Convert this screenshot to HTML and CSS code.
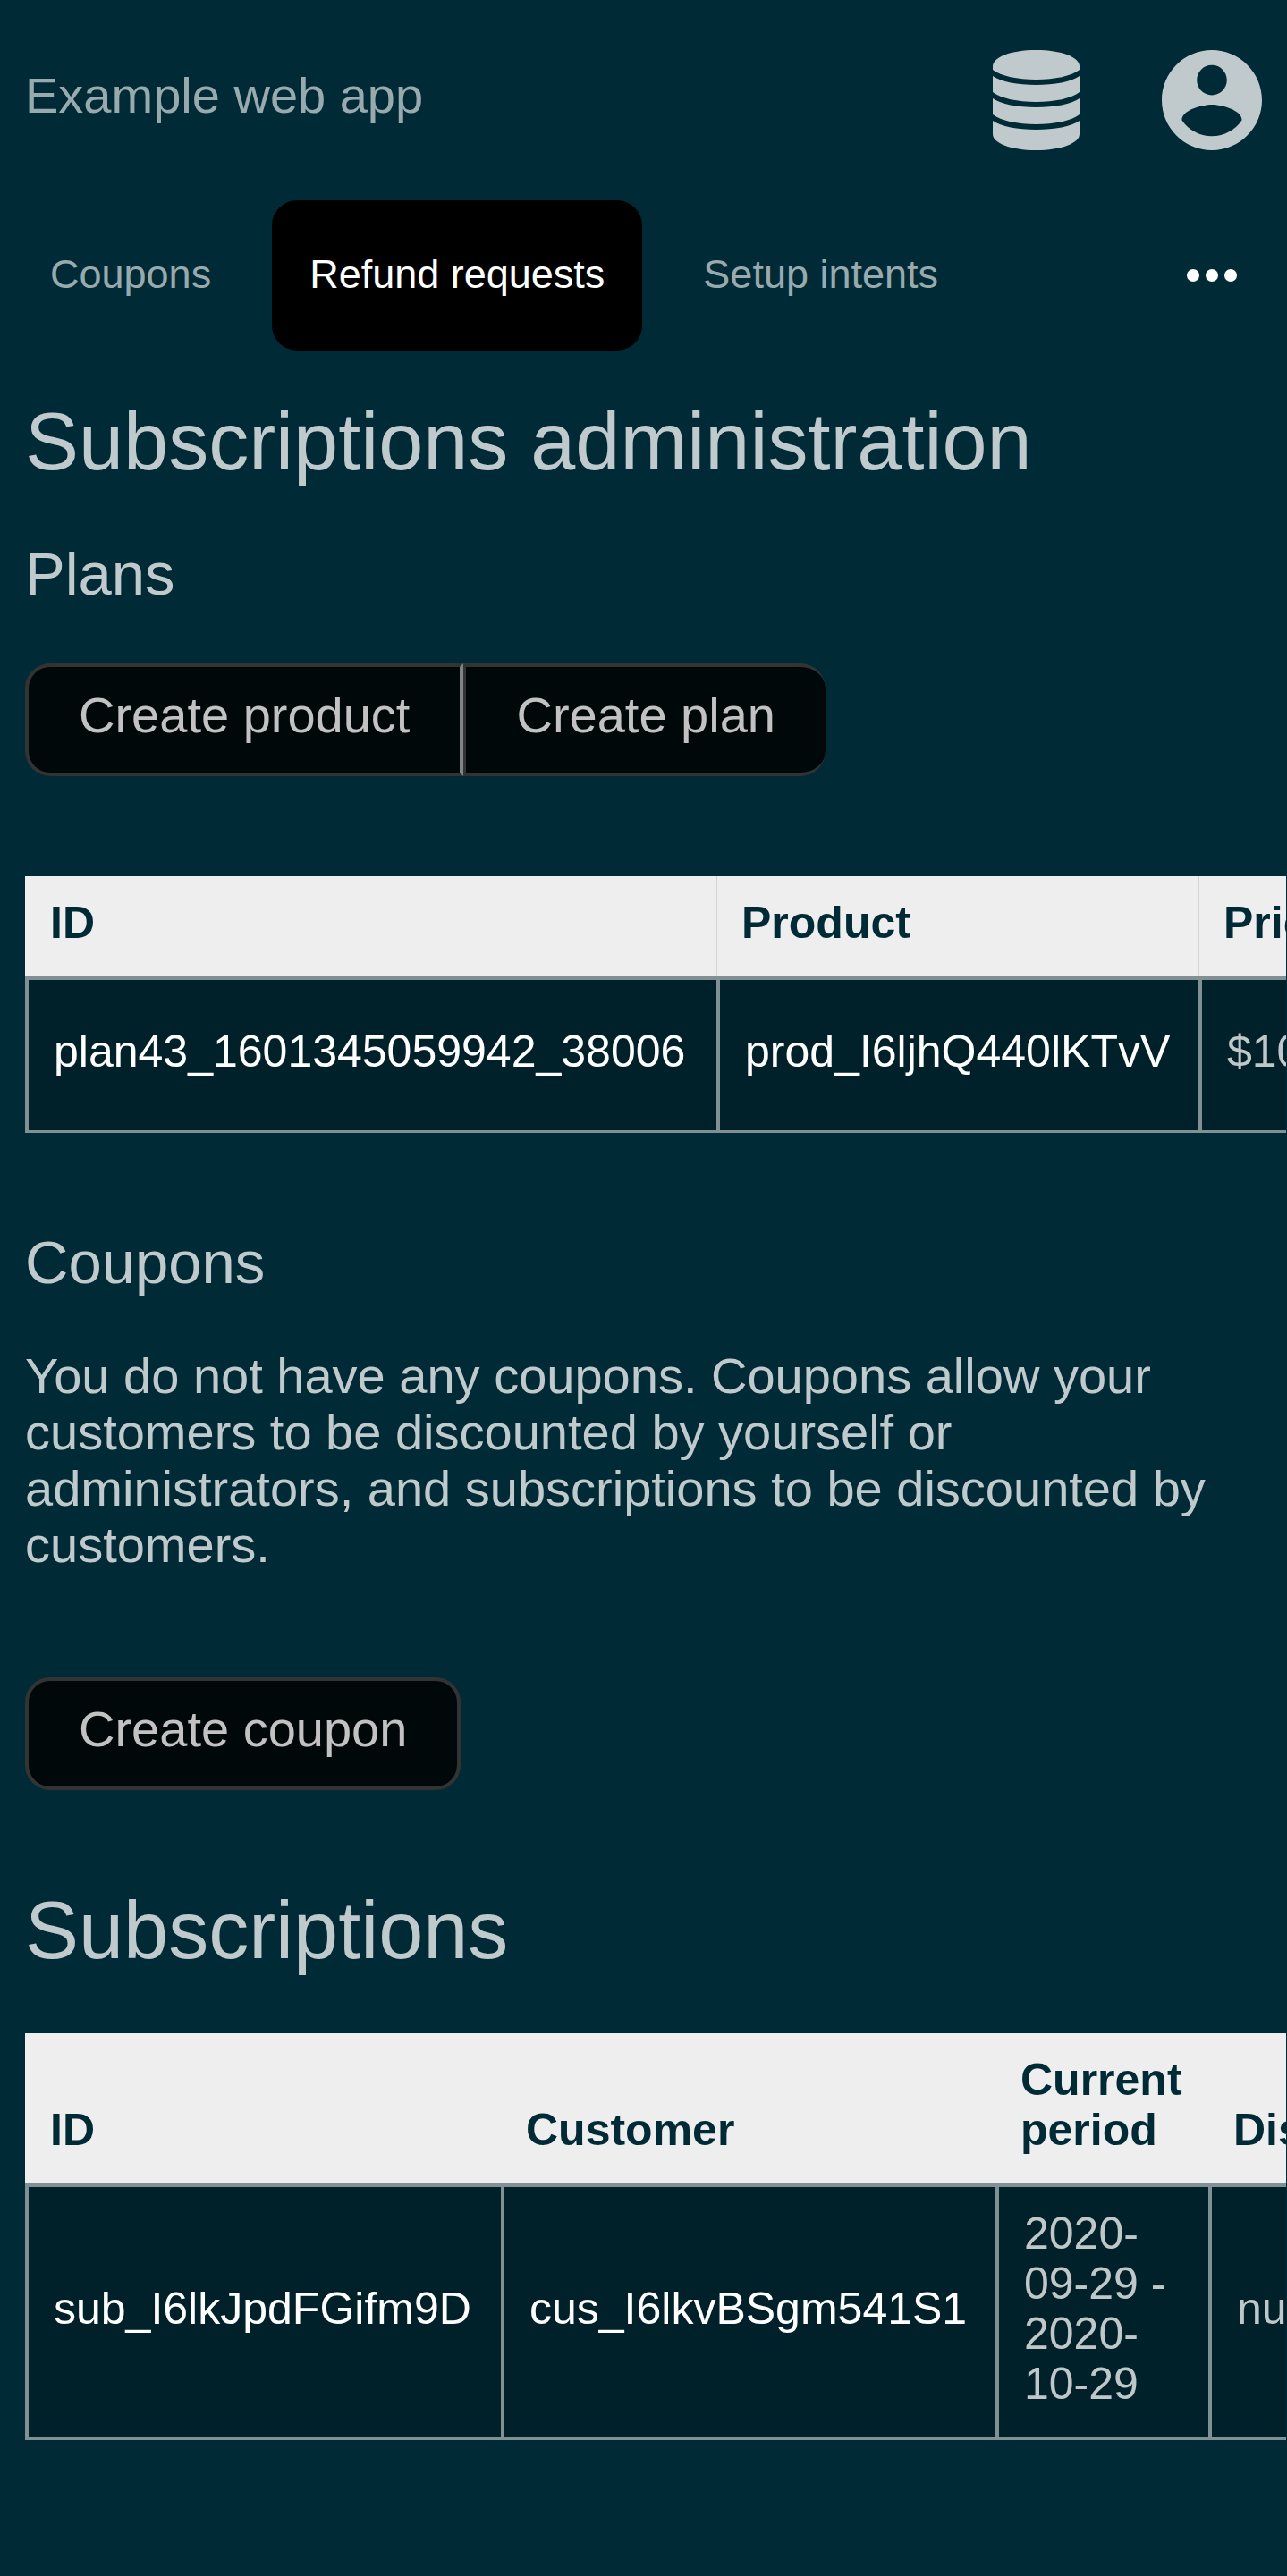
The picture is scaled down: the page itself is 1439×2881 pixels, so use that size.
FILE: index.html
```html
<!DOCTYPE html>
<html lang="en">
<head>
<meta charset="utf-8">
<meta name="viewport" content="width=device-width, initial-scale=1">
<title>Subscriptions administration</title>
<link rel="stylesheet" href="styles.css">
</head>
<body>
<header class="site-header">
  <a class="brand" href="#">Example web app</a>
  <div class="header-menus">
    <button class="icon-button" type="button" aria-label="Administrator menu">
      <svg class="icon-database" viewBox="0 0 97 112" aria-hidden="true">
        <path d="M0 18C0 8 20 0 48.500 0S97 8 97 18v4C88 29 69 33 48.500 33S9 29 0 22z"/>
        <path d="M0 29c9 6.500 28 10 48.500 10S88 35.500 97 29v18c-9 7-28 11-48.500 11S9 54 0 47z"/>
        <path d="M0 54c9 6.500 28 10 48.500 10S88 60.500 97 54v18c-9 7-28 11-48.500 11S9 79 0 72z"/>
        <path d="M0 79c9 6.500 28 10 48.500 10S88 85.500 97 79v15c0 10-20 18-48.500 18S0 104 0 94z"/>
      </svg>
    </button>
    <button class="icon-button" type="button" aria-label="Account menu">
      <svg class="icon-account" viewBox="2 2 20 20" aria-hidden="true">
        <path d="M12 2C6.480 2 2 6.480 2 12s4.480 10 10 10 10-4.480 10-10S17.520 2 12 2zm0 3c1.660 0 3 1.340 3 3s-1.340 3-3 3-3-1.340-3-3 1.340-3 3-3zm0 14.200c-2.500 0-4.710-1.280-6-3.220.03-1.990 4-3.080 6-3.080 1.990 0 5.970 1.090 6 3.080-1.290 1.940-3.500 3.220-6 3.220z"/>
      </svg>
    </button>
  </div>
</header>

<nav class="tabs">
  <a class="tab" href="#">Coupons</a>
  <a class="tab tab-active" href="#">Refund requests</a>
  <a class="tab" href="#">Setup intents</a>
  <button class="more-button" type="button" aria-label="More">
    <svg class="icon-more" viewBox="0 0 56 14" aria-hidden="true">
      <circle cx="7" cy="7" r="7"/><circle cx="28" cy="7" r="7"/><circle cx="49" cy="7" r="7"/>
    </svg>
  </button>
</nav>

<main class="content">
  <h1 class="page-title">Subscriptions administration</h1>

  <section class="section">
    <h2 class="section-title">Plans</h2>
    <div class="button-group">
      <button class="button" type="button">Create product</button>
      <button class="button" type="button">Create plan</button>
    </div>
    <div class="table-scroll">
      <table class="data-table plans-table">
        <colgroup><col class="col-plan-id"><col class="col-product"><col class="col-price"></colgroup>
        <thead>
          <tr><th scope="col">ID</th><th scope="col">Product</th><th scope="col">Price</th></tr>
        </thead>
        <tbody>
          <tr><td><a href="#">plan43_1601345059942_38006</a></td><td><a href="#">prod_I6ljhQ440lKTvV</a></td><td>$10.00</td></tr>
        </tbody>
      </table>
    </div>
  </section>

  <section class="section">
    <h2 class="section-title">Coupons</h2>
    <p class="note">You do not have any coupons. Coupons allow your customers to be discounted by yourself or administrators, and subscriptions to be discounted by customers.</p>
    <button class="button" type="button">Create coupon</button>
  </section>

  <section class="section">
    <h1 class="page-title">Subscriptions</h1>
    <div class="table-scroll">
      <table class="data-table">
        <colgroup><col class="col-sub-id"><col class="col-customer"><col class="col-period"><col class="col-discount"></colgroup>
        <thead>
          <tr><th scope="col">ID</th><th scope="col">Customer</th><th scope="col">Current period</th><th scope="col">Discount</th></tr>
        </thead>
        <tbody>
          <tr><td><a href="#">sub_I6lkJpdFGifm9D</a></td><td><a href="#">cus_I6lkvBSgm541S1</a></td><td>2020-09-29 - 2020-10-29</td><td>null</td></tr>
        </tbody>
      </table>
    </div>
  </section>
</main>
</body>
</html>
```
FILE: styles.css
```css
* {
  box-sizing: border-box;
}

html {
  background: #002b36;
}

body {
  margin: 0;
  color: #c0cacd;
  font-family: "Liberation Sans", Arial, sans-serif;
  font-size: 56px;
  line-height: 63px;
}

a {
  color: inherit;
  text-decoration: none;
}

button {
  margin: 0;
  font: inherit;
  color: inherit;
  cursor: pointer;
}

/* Header */

.site-header {
  display: flex;
  align-items: center;
  justify-content: space-between;
  padding: 56px 28px;
}

.brand {
  padding-bottom: 12px;
  color: #99aaaf;
}

.header-menus {
  display: flex;
  gap: 92px;
}

.icon-button {
  display: flex;
  padding: 0;
  border: 0;
  background: none;
}

.icon-database,
.icon-account {
  height: 112px;
  fill: #c0cacd;
}

.icon-database {
  width: 97px;
}

.icon-account {
  width: 112px;
}

/* Tabs */

.tabs {
  display: flex;
  gap: 26px;
  padding: 0 14px;
  font-size: 45px;
}

.tab {
  padding: 53px 42px 55px;
  line-height: 60px;
  border-radius: 28px;
  color: #99aaaf;
  white-space: nowrap;
}

.tab-active {
  background: #000;
  color: #fff;
}

.more-button {
  display: flex;
  align-items: center;
  margin-left: auto;
  padding: 0 42px;
  border: 0;
  background: none;
}

.icon-more {
  width: 56px;
  height: 14px;
  fill: #fff;
}

/* Content */

.content {
  padding: 52px 1px 150px 28px;
}

.page-title {
  margin: 0;
  font-size: 90px;
  font-weight: 400;
  line-height: 100px;
}

.section-title {
  margin: 0 0 57px;
  font-size: 67px;
  font-weight: 400;
  line-height: 76px;
}

.section {
  margin: 0 0 107px;
}

.page-title + .section {
  margin-top: 60px;
}

.note {
  margin: 0 28px 117px 0;
}

.page-title + .table-scroll {
  margin-top: 65px;
}

/* Buttons */

.button {
  display: block;
  padding: 22px 56px 33px;
  border: 4px solid #333;
  border-radius: 28px;
  background: #00080a;
  color: #c2c2c2;
  white-space: nowrap;
}

.button-group {
  display: flex;
  margin: 62px 0 112px;
}

.button-group .button:first-child {
  border-right-color: #7f8585;
  border-radius: 28px 0 0 28px;
}

.button-group .button:last-child {
  border-right: 0;
  border-left-width: 3px;
  border-radius: 0 28px 28px 0;
}

/* Tables */

.table-scroll {
  overflow-x: auto;
  scrollbar-width: none;
}

.data-table {
  width: 1px;
  table-layout: fixed;
  border-spacing: 0;
  font-size: 50px;
  line-height: 56px;
}

.data-table th,
.data-table td {
  padding: 24px 28px 32px;
  text-align: left;
}

.data-table th {
  background: #eee;
  color: #002b36;
  vertical-align: bottom;
}

.data-table td {
  border: solid #809095;
  border-width: 4px 0 3px 4px;
  background: #002129;
  color: #bfc7c9;
  vertical-align: middle;
}

.data-table td a {
  color: #fff;
  white-space: nowrap;
}

.plans-table th + th {
  box-shadow: inset 1px 0 #d0d4d4;
}

.plans-table td {
  height: 175px;
}

.col-plan-id {
  width: 773px;
}

.col-product {
  width: 539px;
}

.col-price {
  width: 280px;
}

.col-sub-id {
  width: 532px;
}

.col-customer {
  width: 553px;
}

.col-period {
  width: 238px;
}

.col-discount {
  width: 280px;
}
```
